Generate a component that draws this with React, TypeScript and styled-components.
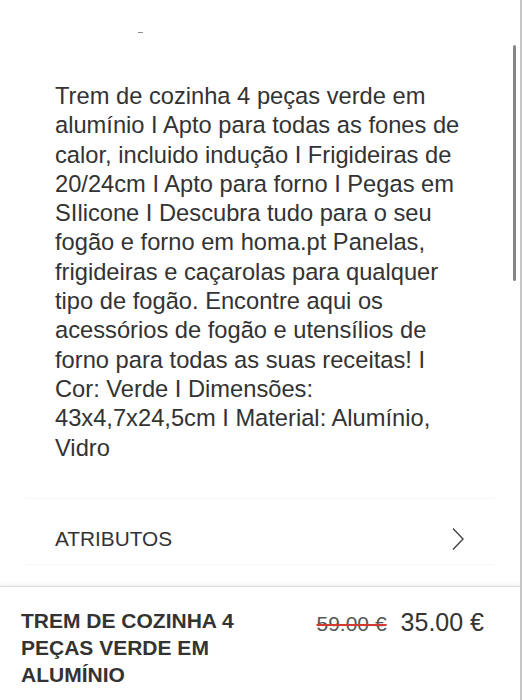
import styled, { createGlobalStyle } from "styled-components"

const GlobalStyle = createGlobalStyle`
  html, body {
    margin: 0;
    padding: 0;
    background: #ffffff;
  }
  body {
    font-family: "Liberation Sans", Arial, Helvetica, sans-serif;
    color: #333333;
  }
`

interface PriceProps {
  $old?: boolean
}

const Page = styled.div`
  position: relative;
  width: 522px;
  height: 700px;
  box-sizing: border-box;
  border-right: 2px solid #c6c6c6;
  overflow: hidden;
  display: flex;
  flex-direction: column;
  background: #ffffff;
`

const ScrollThumb = styled.div`
  position: absolute;
  top: 45px;
  right: 4px;
  width: 3px;
  height: 236px;
  border-radius: 2px;
  background: #858585;
`

const TopStrip = styled.div`
  height: 82px;
  padding-left: 138px;
  box-sizing: border-box;
  padding-top: 32px;
`

const Dash = styled.span`
  display: block;
  width: 5px;
  height: 1px;
  background: #8a8a8a;
`

const Description = styled.p`
  margin: 0;
  padding: 0 50px 0 55px;
  font-size: 23.7px;
  line-height: 29.3px;
  color: #333333;
`

const AttrRow = styled.div`
  margin: 35px 26px 0 26px;
  height: 67px;
  box-sizing: border-box;
  padding: 16px 29px 0 29px;
  border-top: 1px solid #f6f6f6;
  border-bottom: 1px solid #f6f6f6;
  display: flex;
  align-items: center;
  justify-content: space-between;
  h3 {
    margin: 0;
    font-size: 20.8px;
    font-weight: 400;
    color: #333333;
  }
`

const BottomBar = styled.div`
  margin-top: 21px;
  border-top: 1px solid #dcdcdc;
  box-shadow: 0 -1px 3px rgba(0, 0, 0, 0.08);
  padding: 20px 36px 0 21px;
  display: flex;
  justify-content: space-between;
  align-items: flex-start;
  flex: 1;
`

const Title = styled.h2`
  margin: 0;
  width: 250px;
  font-size: 21px;
  line-height: 27px;
  font-weight: 700;
  color: #333333;
`

const Prices = styled.div`
  display: flex;
  align-items: baseline;
  gap: 14px;
  padding-top: 1px;
`

const Price = styled.span<PriceProps>`
  font-size: ${({ $old }) => ($old ? "21px" : "25px")};
  color: ${({ $old }) => ($old ? "#555555" : "#333333")};
  text-decoration: ${({ $old }) => ($old ? "line-through" : "none")};
  text-decoration-color: #d23c30;
  text-decoration-thickness: 2px;
`

const Chevron = () => (
  <svg width="14" height="24" viewBox="0 0 14 24" fill="none">
    <path d="M2 1.5 L12 12 L2 22.5" stroke="#444444" strokeWidth="1.4" />
  </svg>
)

export default function App() {
  return (
    <Page>
      <GlobalStyle />
      <ScrollThumb />
      <TopStrip>
        <Dash />
      </TopStrip>
      <Description>
        Trem de cozinha 4 peças verde em alumínio I Apto para todas as fones de calor,
        incluido indução I Frigideiras de 20/24cm I Apto para forno I Pegas em SIlicone I
        Descubra tudo para o seu fogão e forno em homa.pt Panelas, frigideiras e caçarolas
        para qualquer tipo de fogão. Encontre aqui os acessórios de fogão e utensílios de
        forno para todas as suas receitas! I Cor: Verde I Dimensões: 43x4,7x24,5cm I
        Material: Alumínio, Vidro
      </Description>
      <AttrRow>
        <h3>ATRIBUTOS</h3>
        <Chevron />
      </AttrRow>
      <BottomBar>
        <Title>TREM DE COZINHA 4 PEÇAS VERDE EM ALUMÍNIO</Title>
        <Prices>
          <Price $old>59.00 €</Price>
          <Price>35.00 €</Price>
        </Prices>
      </BottomBar>
    </Page>
  )
}
